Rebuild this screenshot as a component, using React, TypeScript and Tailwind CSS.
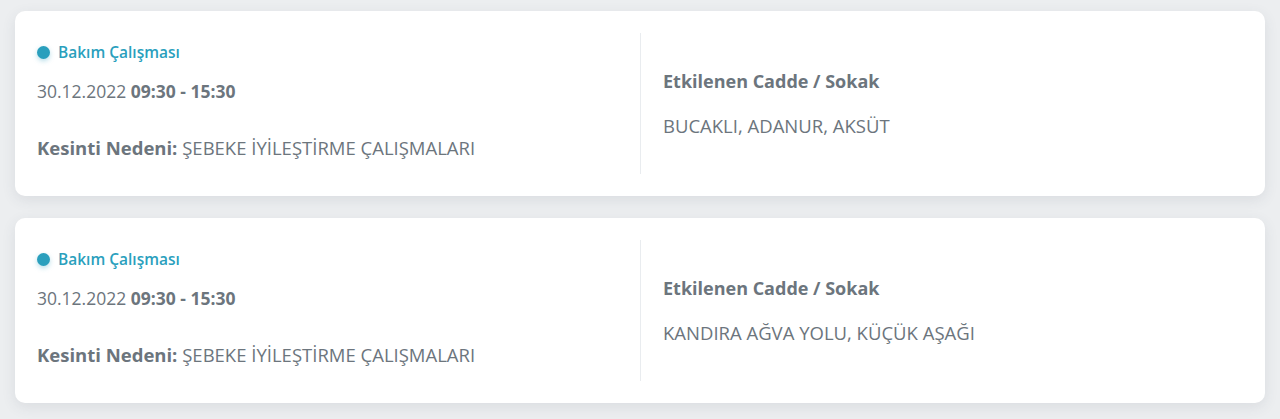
const items = [
  {
    type: "Bakım Çalışması",
    date: "30.12.2022",
    time: "09:30 - 15:30",
    reason: "ŞEBEKE İYİLEŞTİRME ÇALIŞMALARI",
    streets: "BUCAKLI, ADANUR, AKSÜT",
  },
  {
    type: "Bakım Çalışması",
    date: "30.12.2022",
    time: "09:30 - 15:30",
    reason: "ŞEBEKE İYİLEŞTİRME ÇALIŞMALARI",
    streets: "KANDIRA AĞVA YOLU, KÜÇÜK AŞAĞI",
  },
];

export default function App() {
  return (
    <div
      className="min-h-[419px] bg-[#eceef0] px-[15px] pt-[11px] text-[#6c757d]"
      style={{ fontFamily: '"Open Sans", "Noto Sans", sans-serif' }}
    >
      <div className="flex flex-col gap-[22px]">
        {items.map((it, i) => (
          <div
            key={i}
            className="grid h-[185px] grid-cols-2 rounded-[10px] bg-white px-[22px] py-[22px] shadow-[0_4px_14px_rgba(60,72,88,0.10)]"
          >
            <div className="flex flex-col pt-[9px]">
              <div className="flex items-center gap-[8px] text-[15.5px] font-semibold leading-[20px] text-[#2a9fbd]">
                <span className="h-[13px] w-[13px] rounded-full bg-[#2a9fbd] shadow-[0_2px_5px_rgba(42,159,189,0.35)]" />
                {it.type}
              </div>
              <div className="mt-[17px] text-[17.5px] leading-[24px]">
                {it.date} <span className="font-bold">{it.time}</span>
              </div>
              <div className="mt-[33px] text-[18.5px] leading-[24px]">
                <span className="font-bold">Kesinti Nedeni:</span> {it.reason}
              </div>
            </div>
            <div className="flex flex-col justify-center border-l border-[#e9ecef] pl-[22px]">
              <div className="text-[18px] font-bold leading-[24px]">Etkilenen Cadde / Sokak</div>
              <div className="mt-[21px] text-[18.5px] leading-[24px]">{it.streets}</div>
            </div>
          </div>
        ))}
      </div>
    </div>
  );
}
